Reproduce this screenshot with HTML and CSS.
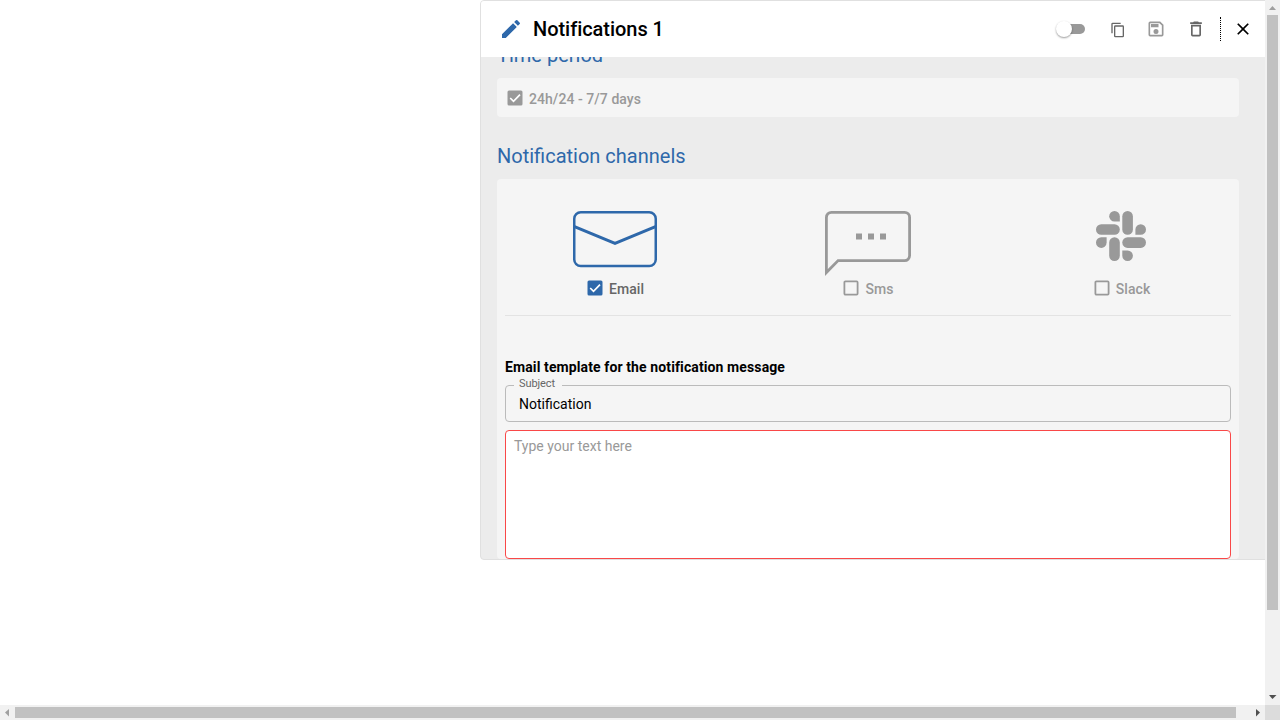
FILE: index.html
```html
<!DOCTYPE html>
<html lang="en">
<head>
<meta charset="utf-8">
<title>Notifications</title>
<link rel="stylesheet" href="styles.css">
</head>
<body>
<div class="window">
  <main class="viewport">
    <section class="panel">
      <header class="header">
        <svg class="pencil" width="24" height="24" viewBox="0 0 24 24"><path d="M3 17.25V21h3.75L17.81 9.94l-3.75-3.75L3 17.25zM20.71 7.04a1 1 0 0 0 0-1.41l-2.34-2.34a1 1 0 0 0-1.41 0l-1.83 1.83 3.75 3.75 1.83-1.83z"/></svg>
        <h1 class="title">Notifications 1</h1>
        <span class="toggle"><span class="knob"></span></span>
        <svg class="copy" width="16" height="16" viewBox="0 0 24 24"><path d="M16 1H4a2 2 0 0 0-2 2v14h2V3h12V1zm3 4H8a2 2 0 0 0-2 2v14a2 2 0 0 0 2 2h11a2 2 0 0 0 2-2V7a2 2 0 0 0-2-2zm0 16H8V7h11v14z"/></svg>
        <svg class="save" width="20" height="20" viewBox="0 0 24 24"><path d="M17 3H5a2 2 0 0 0-2 2v14a2 2 0 0 0 2 2h14a2 2 0 0 0 2-2V7l-4-4zm2 16H5V5h11.17L19 7.83V19zm-7-7a3 3 0 1 0 0 6 3 3 0 0 0 0-6zM6 6h9v4H6V6z"/></svg>
        <svg class="trash" width="20" height="20" viewBox="0 0 24 24"><path d="M6 19a2 2 0 0 0 2 2h8a2 2 0 0 0 2-2V7H6v12zM8 9h8v10H8V9zm7.5-5-1-1h-5l-1 1H5v2h14V4h-3.5z"/></svg>
        <span class="separator"></span>
        <svg class="close" width="20" height="20" viewBox="0 0 24 24"><path d="M19 6.41 17.59 5 12 10.59 6.41 5 5 6.41 10.59 12 5 17.59 6.41 19 12 13.41 17.59 19 19 17.59 13.41 12 19 6.41z"/></svg>
      </header>
      <div class="body">
        <h2 class="heading">Time period</h2>
        <div class="card period">
          <span class="check"><svg class="box" viewBox="0 0 16 16"><rect class="fill" x=".5" y=".5" width="15" height="15" rx="1.5"/><path class="tick" d="M3.2 8 6.5 11.3 13 4.6"/></svg>24h/24 - 7/7 days</span>
        </div>
        <h2 class="heading second">Notification channels</h2>
        <div class="card">
          <div class="channels">
            <div class="channel email">
              <svg class="art" width="84" height="66" viewBox="0 0 84 66"><g fill="none" stroke="#2e68aa" stroke-width="2.5"><rect x="1.25" y="1.25" width="81.5" height="53.7" rx="6.5"/><path d="M1.5 15.7 42 32.5 82.5 15.7" stroke-width="3"/></g></svg>
              <span class="check active"><svg class="box" viewBox="0 0 16 16"><rect class="fill" x=".5" y=".5" width="15" height="15" rx="1.5"/><path class="tick" d="M3.2 8 6.5 11.3 13 4.6"/></svg>Email</span>
            </div>
            <div class="channel sms">
              <svg class="art" width="86" height="66" viewBox="0 0 86 66"><path d="M1.4 61.600V6.4a5 5 0 0 1 5-5h73.2a5 5 0 0 1 5 5v38.200a5 5 0 0 1-5 5H13.1z" fill="none" stroke="#999" stroke-width="2.8" stroke-miterlimit="8"/><path d="M31 22.500h6v6h-6zm12 0h6v6h-6zm12 0h6v6h-6z" fill="#999"/></svg>
              <span class="check"><svg class="box" viewBox="0 0 16 16"><rect class="outline" x="1.4" y="1.4" width="13.2" height="13.2" rx="1"/></svg>Sms</span>
            </div>
            <div class="channel slack">
              <svg class="art" width="50" height="66" viewBox="0 0 50 66"><g fill="#999"><path d="M10.6 31.6a5.3 5.3 0 1 1-5.3-5.3h5.3z"/><rect x="13.2" y="26.3" width="10.6" height="23.7" rx="5.3"/><path d="M23.8 10.600h-5.300a5.3 5.3 0 1 1 5.3-5.3z"/><rect x="0" y="13.2" width="23.8" height="10.6" rx="5.3"/><path d="M39.4 18.5a5.3 5.3 0 1 1 5.3 5.3h-5.3z"/><rect x="26.3" y="0" width="10.6" height="23.8" rx="5.3"/><path d="M31.6 39.4a5.3 5.3 0 1 1-5.3 5.3v-5.3z"/><rect x="26.3" y="26.3" width="23.7" height="10.6" rx="5.3"/></g></svg>
              <span class="check"><svg class="box" viewBox="0 0 16 16"><rect class="outline" x="1.4" y="1.4" width="13.2" height="13.2" rx="1"/></svg>Slack</span>
            </div>
          </div>
          <h3 class="template">Email template for the notification message</h3>
          <fieldset class="subject"><legend>Subject</legend>Notification</fieldset>
          <div class="message">Type your text here</div>
        </div>
      </div>
    </section>
  </main>
  <div class="vbar"><svg width="15" height="15"><path d="M4 10l3.5-4L11 10z" fill="#a0a0a0"/></svg><div class="vthumb"></div><svg class="end" width="15" height="15"><path d="M4 5h7.500L7.500 9z" fill="#505050"/></svg></div>
  <div class="hbar"><svg width="15" height="15"><path d="M9 4v7.500L5 7.500z" fill="#a0a0a0"/></svg><div class="hthumb"></div><svg class="end" width="15" height="15"><path d="M6 4v7.500L10 7.500z" fill="#505050"/></svg></div>
  <div class="corner"></div>
</div>
</body>
</html>
```
FILE: styles.css
```css
* { box-sizing: border-box; }
body { margin: 0; background: #fff; font: 14px Roboto, sans-serif; color: #000; overflow: hidden; }
svg { display: block; flex: none; }
h1, h2, h3 { margin: 0; }
.window { display: grid; grid-template: 705px 15px / 1265px 15px; width: 1280px; height: 720px; }
.viewport { overflow: hidden; padding-left: 480px; }
.panel { display: flex; flex-direction: column; width: 800px; height: 560px; border: 1px solid #e0e0e0; border-radius: 4px; background: #ececec; overflow: hidden; }
.header { display: flex; flex: none; align-items: center; height: 56px; padding-left: 18px; background: #fff; }
.pencil { fill: #2e68aa; }
.title { margin-left: 10px; width: 523px; font-size: 20px; line-height: 24px; font-weight: 500; letter-spacing: -.04px; }
.toggle { display: flex; align-items: center; width: 27px; height: 10px; margin-left: 2px; border-radius: 5px; background: #999; }
.knob { width: 16px; height: 16px; margin-left: -2px; border-radius: 50%; background: #fff; box-shadow: 0 1px 2px rgba(0, 0, 0, .4); }
.copy { margin-left: 25px; margin-top: 2px; fill: #666; }
.save { margin-left: 20px; fill: #999; }
.trash { margin-left: 20px; fill: #666; }
.separator { width: 0; height: 24px; margin-left: 14px; border-left: 1px dotted #000; }
.close { margin-left: 12px; }
.body { padding: 0 41px 0 16px; flex: 1; min-height: 0; overflow: hidden; }
.heading { margin-top: -14px; font-size: 20px; line-height: 24px; font-weight: 400; color: #2e68aa; }
.heading.second { margin-top: 27px; }
.card { margin-top: 11px; padding: 0 8px; border-radius: 4px; background: #f5f5f5; width: 742px; }
.period { height: 39px; padding: 12px 10px; }
.check { display: flex; align-items: center; gap: 6px; height: 18px; font-weight: 500; line-height: 18px; letter-spacing: .06px; color: #999; }
.box { width: 16px; height: 16px; margin-top: -2px; }
.fill { fill: #999; }
.active { color: #666; }
.active .fill { fill: #2e68aa; }
.tick { fill: none; stroke: #fff; stroke-width: 1.7; }
.outline { fill: none; stroke: #999; stroke-width: 1.8; }
.channels { display: flex; height: 137px; padding-top: 32px; border-bottom: 1px solid #e3e3e3; }
.channel { display: flex; flex-direction: column; align-items: center; gap: 3px; }
.email { margin-left: 68px; width: 84px; }
.sms { margin-left: 168px; width: 86px; }
.sms .check, .email .check { margin-left: 1px; }
.slack { margin-left: 183px; width: 56px; }
.slack .art { margin-right: 2px; }
.template { margin-top: 42px; font-size: 14px; line-height: 18px; font-weight: 700; letter-spacing: .11px; }
.subject { height: 43px; margin: 3px 0 0; padding: 3px 13px 0 8px; border: 1px solid #bbb; border-radius: 4px; line-height: 20px; text-indent: 5px; }
.subject legend { height: 12px; padding: 0 7px 0 5px; font-size: 11px; line-height: 10px; letter-spacing: -.1px; text-indent: 0; color: #666; }
.message { height: 129px; margin-top: 8px; padding: 6px 8px; border: 1px solid #f94848; border-radius: 4px; background: #fff; color: #999; line-height: 18px; }
.vbar, .hbar { display: flex; background: #f1f1f1; }
.vbar { flex-direction: column; grid-area: 1 / 2; }
.hbar { grid-area: 2 / 1; }
.vthumb { width: 11px; height: 595px; margin-left: 2px; background: #c1c1c1; }
.hthumb { width: 1221px; height: 11px; margin-top: 2px; background: #c1c1c1; }
.vbar .end { margin-top: auto; }
.hbar .end { margin-left: auto; }
.corner { background: #dcdcdc; }
```
